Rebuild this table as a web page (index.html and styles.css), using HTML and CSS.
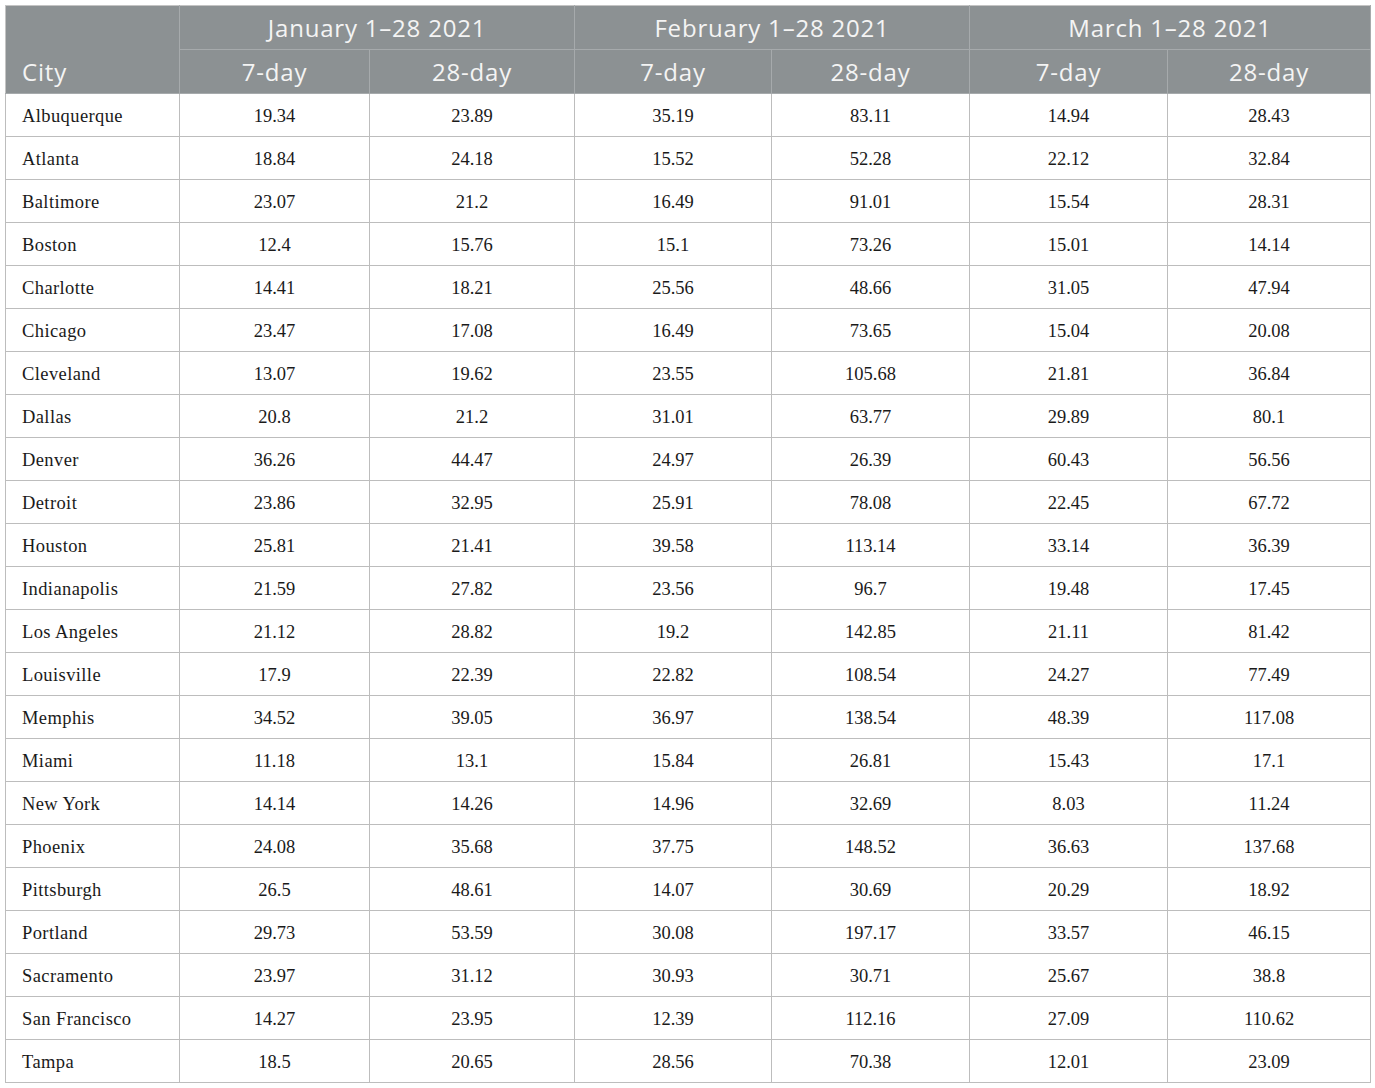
FILE: index.html
```html
<!DOCTYPE html>
<html>
<head>
<meta charset="utf-8">
<link rel="stylesheet" href="styles.css">
</head>
<body>
<table class="data">
<colgroup>
<col class="c0"><col class="c1"><col class="c2"><col class="c3"><col class="c4"><col class="c5"><col class="c6">
</colgroup>
<thead>
<tr class="h1">
<th class="city" rowspan="2">City</th>
<th colspan="2">January 1–28 2021</th>
<th colspan="2">February 1–28 2021</th>
<th colspan="2">March 1–28 2021</th>
</tr>
<tr class="h2">
<th>7-day</th><th>28-day</th><th>7-day</th><th>28-day</th><th>7-day</th><th>28-day</th>
</tr>
</thead>
<tbody>
<tr><td>Albuquerque</td><td>19.34</td><td>23.89</td><td>35.19</td><td>83.11</td><td>14.94</td><td>28.43</td></tr>
<tr><td>Atlanta</td><td>18.84</td><td>24.18</td><td>15.52</td><td>52.28</td><td>22.12</td><td>32.84</td></tr>
<tr><td>Baltimore</td><td>23.07</td><td>21.2</td><td>16.49</td><td>91.01</td><td>15.54</td><td>28.31</td></tr>
<tr><td>Boston</td><td>12.4</td><td>15.76</td><td>15.1</td><td>73.26</td><td>15.01</td><td>14.14</td></tr>
<tr><td>Charlotte</td><td>14.41</td><td>18.21</td><td>25.56</td><td>48.66</td><td>31.05</td><td>47.94</td></tr>
<tr><td>Chicago</td><td>23.47</td><td>17.08</td><td>16.49</td><td>73.65</td><td>15.04</td><td>20.08</td></tr>
<tr><td>Cleveland</td><td>13.07</td><td>19.62</td><td>23.55</td><td>105.68</td><td>21.81</td><td>36.84</td></tr>
<tr><td>Dallas</td><td>20.8</td><td>21.2</td><td>31.01</td><td>63.77</td><td>29.89</td><td>80.1</td></tr>
<tr><td>Denver</td><td>36.26</td><td>44.47</td><td>24.97</td><td>26.39</td><td>60.43</td><td>56.56</td></tr>
<tr><td>Detroit</td><td>23.86</td><td>32.95</td><td>25.91</td><td>78.08</td><td>22.45</td><td>67.72</td></tr>
<tr><td>Houston</td><td>25.81</td><td>21.41</td><td>39.58</td><td>113.14</td><td>33.14</td><td>36.39</td></tr>
<tr><td>Indianapolis</td><td>21.59</td><td>27.82</td><td>23.56</td><td>96.7</td><td>19.48</td><td>17.45</td></tr>
<tr><td>Los Angeles</td><td>21.12</td><td>28.82</td><td>19.2</td><td>142.85</td><td>21.11</td><td>81.42</td></tr>
<tr><td>Louisville</td><td>17.9</td><td>22.39</td><td>22.82</td><td>108.54</td><td>24.27</td><td>77.49</td></tr>
<tr><td>Memphis</td><td>34.52</td><td>39.05</td><td>36.97</td><td>138.54</td><td>48.39</td><td>117.08</td></tr>
<tr><td>Miami</td><td>11.18</td><td>13.1</td><td>15.84</td><td>26.81</td><td>15.43</td><td>17.1</td></tr>
<tr><td>New York</td><td>14.14</td><td>14.26</td><td>14.96</td><td>32.69</td><td>8.03</td><td>11.24</td></tr>
<tr><td>Phoenix</td><td>24.08</td><td>35.68</td><td>37.75</td><td>148.52</td><td>36.63</td><td>137.68</td></tr>
<tr><td>Pittsburgh</td><td>26.5</td><td>48.61</td><td>14.07</td><td>30.69</td><td>20.29</td><td>18.92</td></tr>
<tr><td>Portland</td><td>29.73</td><td>53.59</td><td>30.08</td><td>197.17</td><td>33.57</td><td>46.15</td></tr>
<tr><td>Sacramento</td><td>23.97</td><td>31.12</td><td>30.93</td><td>30.71</td><td>25.67</td><td>38.8</td></tr>
<tr><td>San Francisco</td><td>14.27</td><td>23.95</td><td>12.39</td><td>112.16</td><td>27.09</td><td>110.62</td></tr>
<tr><td>Tampa</td><td>18.5</td><td>20.65</td><td>28.56</td><td>70.38</td><td>12.01</td><td>23.09</td></tr>
</tbody>
</table>
</body>
</html>
```

FILE: styles.css
```css
html, body {
  margin: 0;
  padding: 0;
  background: #ffffff;
}

body {
  padding: 5px 0 0 5px;
}

.data {
  border-collapse: collapse;
  table-layout: fixed;
  width: 1365px;
  border: 1px solid #c4c4c4;
}

.c0 { width: 174px; }
.c1 { width: 190px; }
.c2 { width: 205px; }
.c3 { width: 197px; }
.c4 { width: 198px; }
.c5 { width: 198px; }
.c6 { width: 203px; }

.data th {
  background: #8c9193;
  color: #f4f4f4;
  font-family: "Open Sans", "Lato", sans-serif;
  font-weight: 400;
  font-size: 24px;
  letter-spacing: 0.8px;
  text-align: center;
  padding: 0;
  border: 1px solid #a6aaac;
  line-height: 28px;
}

.data .h1 th {
  height: 43px;
  border-top-color: #c4c4c4;
  vertical-align: middle;
}

.data .h2 th {
  height: 43px;
  vertical-align: middle;
}

.data th.city {
  text-align: left;
  padding-left: 16px;
  vertical-align: bottom;
  padding-bottom: 7px;
  border-left-color: #c4c4c4;
}

.data td {
  font-family: "Liberation Serif", "Times New Roman", serif;
  font-size: 18.5px;
  color: #1a1a1a;
  text-align: center;
  height: 40px;
  padding: 2px 0 0 0;
  border: 1px solid #bdbdbd;
  vertical-align: middle;
}

.data td:first-child {
  text-align: left;
  padding-left: 16px;
  letter-spacing: 0.4px;
}
```
